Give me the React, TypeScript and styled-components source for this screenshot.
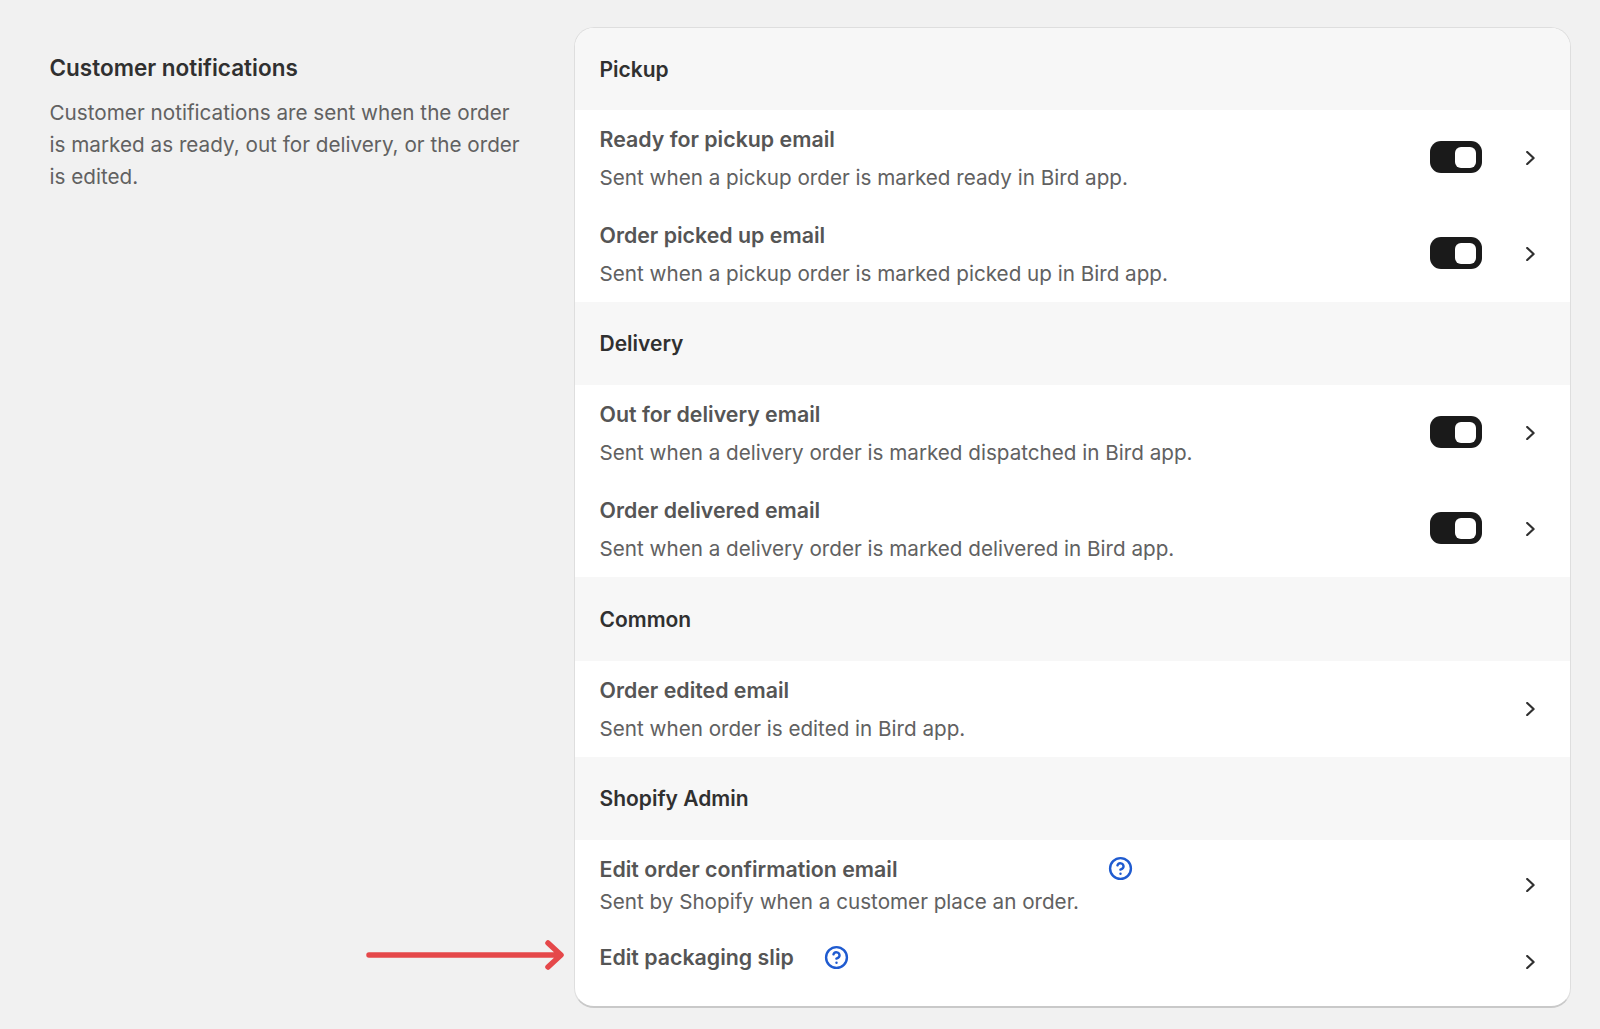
import React from "react";
import styled, { createGlobalStyle } from "styled-components";
import { CircleHelp } from "lucide-react";

const Global = createGlobalStyle`
  html, body {
    margin: 0;
    padding: 0;
    background: #f1f1f1;
  }
  body {
    font-family: Inter, "Liberation Sans", sans-serif;
    -webkit-font-smoothing: antialiased;
  }
`;

const Page = styled.div`
  display: grid;
  grid-template-columns: 574px 997px;
  height: 1029px;
  padding-top: 27px;
  box-sizing: border-box;
  overflow: hidden;
`;

const Intro = styled.div`
  padding: 25px 40px 0 49.5px;
`;

const IntroTitle = styled.h2`
  margin: 0 0 13px;
  font-size: 22.5px;
  line-height: 32px;
  font-weight: 600;
  color: #303030;
`;

const IntroText = styled.p`
  margin: 0;
  width: 475px;
  font-size: 20.7px;
  line-height: 32px;
  color: #616161;
`;

const Card = styled.div`
  align-self: start;
  height: 981px;
  box-sizing: border-box;
  background: #fff;
  border: 1px solid #dedede;
  border-bottom: 2px solid #c9c9c9;
  border-radius: 20px;
  overflow: hidden;
`;

const SectionHead = styled.div<{ $height: number }>`
  display: flex;
  align-items: center;
  height: ${(p) => p.$height}px;
  padding: 0 24.5px;
  background: #f7f7f7;
  font-size: 21px;
  font-weight: 600;
  color: #303030;
`;

const Row = styled.div<{ $height?: number }>`
  display: flex;
  align-items: center;
  box-sizing: border-box;
  height: ${(p) => p.$height ?? 96}px;
  padding: 0 35px 0 24.5px;
`;

const RowBody = styled.div<{ $gap?: number; $lift?: number }>`
  flex: 1;
  display: flex;
  flex-direction: column;
  gap: ${(p) => p.$gap ?? 7}px;
  padding-bottom: ${(p) => p.$lift ?? 0}px;
`;

const RowTitle = styled.div`
  display: flex;
  align-items: center;
  height: 32px;
  font-size: 21.35px;
  font-weight: 600;
  color: #555;
`;

const RowText = styled.div`
  font-size: 20.65px;
  line-height: 32px;
  color: #616161;
`;

const Help = styled(CircleHelp)<{ $gap: number }>`
  margin-left: ${(p) => p.$gap}px;
  color: #1f5bd0;
`;

const Toggle = styled.span`
  display: flex;
  justify-content: flex-end;
  align-items: center;
  box-sizing: border-box;
  width: 52px;
  height: 32px;
  margin: 0 44px 2px 0;
  padding-right: 6px;
  background: #1a1a1a;
  border-radius: 11px;

  &::after {
    content: "";
    width: 21px;
    height: 21px;
    background: #fff;
    border-radius: 6px;
  }
`;

const Chevron = styled.svg`
  flex: none;
  width: 9px;
  height: 14px;
  fill: none;
  stroke: #303030;
  stroke-width: 2.2;
  stroke-linecap: round;
  stroke-linejoin: round;
`;

const ArrowAnchor = styled.div`
  position: relative;
`;

const Arrow = styled.svg`
  position: absolute;
  left: -208px;
  top: 913px;
  width: 198px;
  height: 30px;
  fill: none;
  stroke: #e5484a;
  stroke-width: 5.5;
  stroke-linecap: round;
  stroke-linejoin: round;
`;

function RowChevron() {
  return (
    <Chevron viewBox="0 0 9 14">
      <path d="M1.2 1 7.6 7 1.2 13" />
    </Chevron>
  );
}

type Item = { title: string; text: string; toggle?: boolean };

const sections: { name: string; height: number; items: Item[] }[] = [
  {
    name: "Pickup",
    height: 82,
    items: [
      { title: "Ready for pickup email", text: "Sent when a pickup order is marked ready in Bird app.", toggle: true },
      { title: "Order picked up email", text: "Sent when a pickup order is marked picked up in Bird app.", toggle: true },
    ],
  },
  {
    name: "Delivery",
    height: 83,
    items: [
      { title: "Out for delivery email", text: "Sent when a delivery order is marked dispatched in Bird app.", toggle: true },
      { title: "Order delivered email", text: "Sent when a delivery order is marked delivered in Bird app.", toggle: true },
    ],
  },
  {
    name: "Common",
    height: 84,
    items: [{ title: "Order edited email", text: "Sent when order is edited in Bird app." }],
  },
];

export default function App() {
  return (
    <>
      <Global />
      <Page>
        <Intro>
          <IntroTitle>Customer notifications</IntroTitle>
          <IntroText>
            Customer notifications are sent when the order is marked as ready,
            out for delivery, or the order is edited.
          </IntroText>
        </Intro>
        <ArrowAnchor>
          <Card>
            {sections.map((s) => (
              <div key={s.name}>
                <SectionHead $height={s.height}>{s.name}</SectionHead>
                {s.items.map((item) => (
                  <Row key={item.title}>
                    <RowBody>
                      <RowTitle>{item.title}</RowTitle>
                      <RowText>{item.text}</RowText>
                    </RowBody>
                    {item.toggle && <Toggle />}
                    <RowChevron />
                  </Row>
                ))}
              </div>
            ))}
            <SectionHead $height={83}>Shopify Admin</SectionHead>
            <Row $height={90}>
              <RowBody $gap={1}>
                <RowTitle>
                  Edit order confirmation email
                  <Help $gap={210} size={25} strokeWidth={2.3} />
                </RowTitle>
                <RowText>Sent by Shopify when a customer place an order.</RowText>
              </RowBody>
              <RowChevron />
            </Row>
            <Row $height={64}>
              <RowBody $lift={10}>
                <RowTitle>
                  Edit packaging slip
                  <Help $gap={30} size={25} strokeWidth={2.3} />
                </RowTitle>
              </RowBody>
              <RowChevron />
            </Row>
          </Card>
          <Arrow viewBox="0 0 198 30">
            <path d="M3 15H194M182 3 195 15 182 27" />
          </Arrow>
        </ArrowAnchor>
      </Page>
    </>
  );
}
